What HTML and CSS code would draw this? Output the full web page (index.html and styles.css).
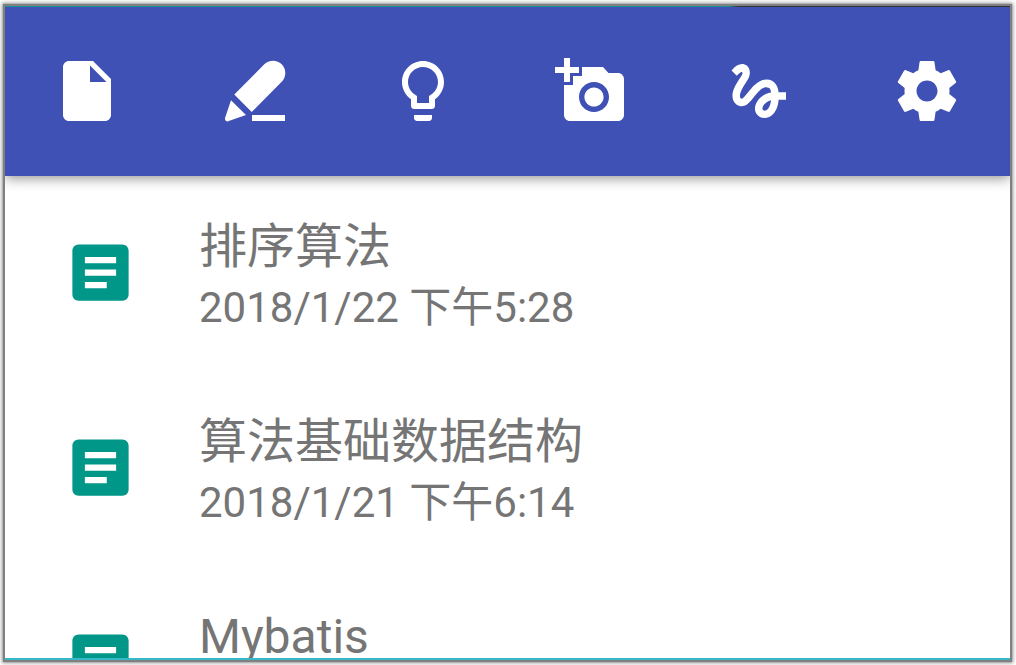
FILE: index.html
```html
<!DOCTYPE html>
<html lang="zh-CN">
<head>
<meta charset="utf-8">
<meta name="viewport" content="width=device-width, initial-scale=1">
<title>Notes</title>
<link rel="stylesheet" href="styles.css">
</head>
<body>
<svg class="symbols" aria-hidden="true">
  <symbol id="article" viewBox="0 0 24 24"><path fill-rule="evenodd" d="M19 3H5c-1.1 0-2 .9-2 2v14c0 1.1.9 2 2 2h14c1.1 0 2-.9 2-2V5c0-1.1-.9-2-2-2zM7 7h10v2H7zM7 11h10v2H7zM7 15h7v2H7z"/></symbol>
</svg>
<div class="screen">
  <div class="edge edge-top"></div>
  <header class="toolbar">
    <button class="tool" type="button" aria-label="New note"><svg viewBox="0 0 24 24"><path d="M6 2c-1.1 0-2 .9-2 2v16c0 1.100.9 2 2 2h12c1.100 0 2-.9 2-2V8l-6-6H6zm7 7V3.500L18.500 9H13z"/></svg></button>
    <button class="tool" type="button" aria-label="Draw"><svg viewBox="0 0 24 24"><path d="M5.100 13.200 15.100 3.100A4.100 4.100 0 0 1 20.900 8.900L10.900 19zM4 15.100 9 20 3 22.100Q1.900 22.300 2 21zM11 20h11v2H11z"/></svg></button>
    <button class="tool" type="button" aria-label="Idea"><svg viewBox="0 0 24 24"><path d="M9 21c0 .55.45 1 1 1h4c.55 0 1-.45 1-1v-1H9v1zm3-19C8.140 2 5 5.140 5 9c0 2.380 1.190 4.470 3 5.740V17c0 .55.45 1 1 1h6c.55 0 1-.45 1-1v-2.260c1.810-1.270 3-3.360 3-5.740 0-3.860-3.140-7-7-7zm2.850 11.100l-.85.6V16h-4v-2.300l-.85-.6C7.800 12.160 7 10.630 7 9c0-2.760 2.240-5 5-5s5 2.240 5 5c0 1.630-.8 3.160-2.150 4.100z"/></svg></button>
    <button class="tool" type="button" aria-label="Add photo"><svg viewBox="0 0 24 24"><path d="M3 4V1h2v3h3v2H5v3H3V6H0V4h3zm3 6V7h3V4h7l1.830 2H21c1.100 0 2 .9 2 2v12c0 1.100-.9 2-2 2H5c-1.100 0-2-.9-2-2V10h3zm7 9c2.760 0 5-2.240 5-5s-2.240-5-5-5-5 2.240-5 5 2.240 5 5 5zm-3.200-5c0 1.770 1.430 3.200 3.200 3.200s3.200-1.430 3.200-3.200-1.430-3.200-3.200-3.200-3.200 1.430-3.200 3.200z"/></svg></button>
    <button class="tool" type="button" aria-label="Handwriting"><svg viewBox="0 0 24 24"><path d="M4.590 6.890c.7-.71 1.400-1.350 1.710-1.220.5.2 0 1.030-.3 1.520-.25.42-2.860 3.890-2.860 6.310 0 1.280.48 2.340 1.340 2.980.75.56 1.740.73 2.640.46 1.070-.31 1.950-1.400 3.060-2.770 1.210-1.490 2.830-3.440 4.080-3.440 1.630 0 1.650 1.010 1.760 1.790-3.780.64-5.380 3.670-5.380 5.370 0 1.700 1.440 3.090 3.210 3.090 1.630 0 4.290-1.330 4.690-6.100H21v-2.500h-2.470c-.15-1.650-1.090-4.200-4.030-4.200-2.250 0-4.180 1.910-4.940 2.840-.58.73-2.060 2.480-2.290 2.720-.25.3-.68.84-1.110.84-.45 0-.72-.83-.36-1.920.35-1.090 1.400-2.860 1.850-3.520.78-1.140 1.300-1.920 1.300-3.280C8.950 3.690 7.310 3 6.440 3 5.120 3 3.970 4 3.720 4.250c-.36.36-.66.66-.88.93l1.750 1.710zm9.290 11.660c-.31 0-.74-.26-.74-.72 0-.6.73-2.200 2.870-2.760-.3 2.690-1.430 3.480-2.130 3.480z"/></svg></button>
    <button class="tool" type="button" aria-label="Settings"><svg viewBox="0 0 24 24"><path d="M19.430 12.980c.04-.32.07-.64.07-.98s-.03-.66-.07-.98l2.110-1.650c.19-.15.24-.42.12-.64l-2-3.460c-.12-.22-.39-.3-.61-.22l-2.490 1c-.52-.4-1.080-.73-1.690-.98l-.38-2.650C14.460 2.180 14.250 2 14 2h-4c-.25 0-.46.18-.49.42l-.38 2.650c-.61.25-1.170.59-1.690.98l-2.490-1c-.23-.09-.49 0-.61.22l-2 3.460c-.13.22-.07.49.12.64l2.110 1.650c-.04.32-.07.65-.07.98s.03.66.07.98l-2.110 1.650c-.19.15-.24.42-.12.64l2 3.460c.12.22.39.3.61.22l2.490-1c.52.4 1.080.73 1.690.98l.38 2.650c.03.24.24.42.49.42h4c.25 0 .46-.18.49-.42l.38-2.650c.61-.25 1.170-.59 1.690-.98l2.490 1c.23.09.49 0 .61-.22l2-3.460c.12-.22.07-.49-.12-.64l-2.110-1.650zM12 15.500c-1.930 0-3.500-1.570-3.500-3.500s1.570-3.500 3.500-3.500 3.500 1.570 3.500 3.500-1.570 3.500-3.500 3.500z"/></svg></button>
  </header>
  <main class="content">
    <ul class="notes">
      <li class="note"><svg class="note-icon"><use href="#article"/></svg><div class="note-text"><div class="title">排序算法</div><div class="date">2018/1/22 下午5:28</div></div></li>
      <li class="note"><svg class="note-icon"><use href="#article"/></svg><div class="note-text"><div class="title">算法基础数据结构</div><div class="date">2018/1/21 下午6:14</div></div></li>
      <li class="note"><svg class="note-icon"><use href="#article"/></svg><div class="note-text"><div class="title">Mybatis</div></div></li>
    </ul>
  </main>
  <div class="edge edge-bottom"></div>
</div>
</body>
</html>
```
FILE: styles.css
```css
* {
  box-sizing: border-box;
}

body {
  height: 100vh;
  margin: 0;
  padding: 6px 6px 5px 5px;
  overflow: hidden;
  background: #fff;
  color: #757575;
  font-family: Roboto, "Noto Sans CJK SC", sans-serif;
}

.symbols {
  display: none;
}

.screen {
  display: flex;
  flex-direction: column;
  height: 100%;
  background: #fff;
  box-shadow: 0 0 1px 2px #808080, 0 0 4px 3px #999;
}

.edge {
  flex: none;
}

.edge-top {
  height: 1px;
  background: linear-gradient(to right, #1c8f96 72%, #333 73%);
}

.edge-bottom {
  height: 2px;
  background: #35b8c8;
}

.toolbar {
  position: relative;
  display: flex;
  flex: none;
  align-items: center;
  justify-content: space-between;
  padding: 48px 47px 49px 46px;
  background: #3f51b5;
  box-shadow: 0 2px 12px rgba(0, 0, 0, 0.45);
  clip-path: inset(0 0 -20px 0);
}

.tool {
  width: 72px;
  height: 72px;
  padding: 0;
  border: 0;
  background: none;
  color: #fff;
}

.tool svg {
  display: block;
  width: 100%;
  height: 100%;
  fill: currentColor;
}

.content {
  flex: 1;
  min-height: 0;
  overflow: hidden;
}

.notes {
  margin: 0;
  padding: 0;
  list-style: none;
}

.note {
  display: flex;
  gap: 61px;
  padding: 40px 48px 34px 58px;
}

.note-icon {
  flex: none;
  align-self: flex-start;
  width: 75px;
  height: 75px;
  margin-top: 19px;
  fill: #009688;
}

.title {
  font-size: 48px;
  line-height: 62px;
}

.date {
  font-size: 42px;
  line-height: 59px;
}
```
